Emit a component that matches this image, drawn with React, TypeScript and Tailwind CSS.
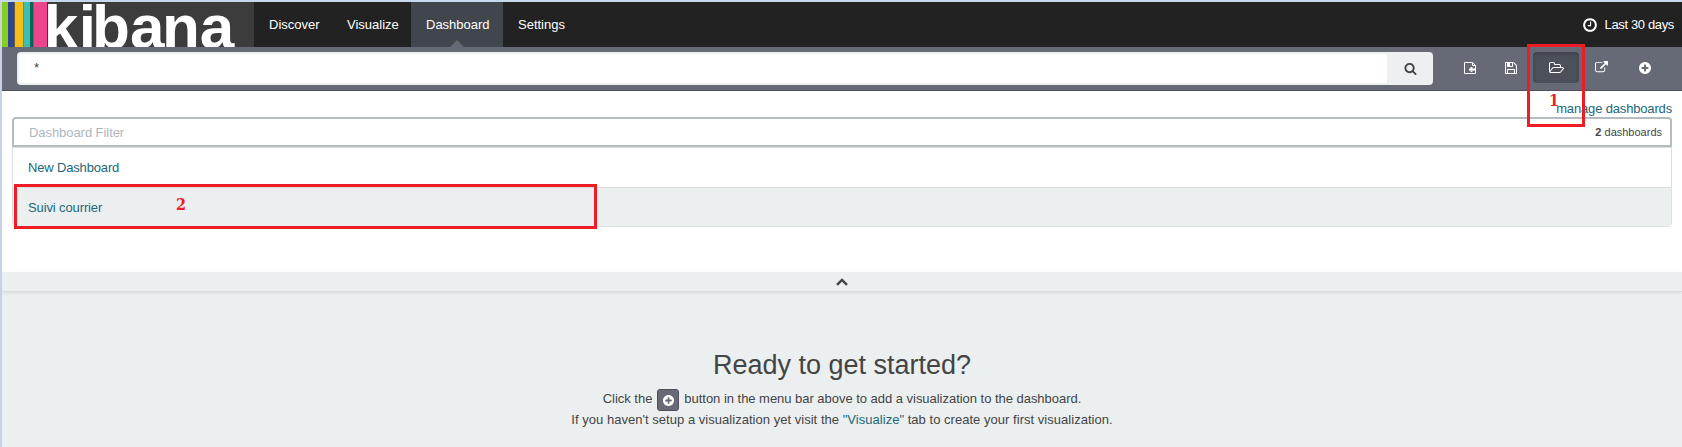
import React from "react";

const P = {
  clock: "M1024 544v448q0 14-9 23t-23 9h-320q-14 0-23-9t-9-23v-64q0-14 9-23t23-9h224v-352q0-14 9-23t23-9h64q14 0 23 9t9 23zm416 352q0-148-73-273t-198-198-273-73-273 73-198 198-73 273 73 273 198 198 273 73 273-73 198-198 73-273zm224 0q0 209-103 385.5t-279.5 279.5-385.5 103-385.5-103-279.5-279.5-103-385.5 103-385.5 279.5-279.5 385.5-103 385.5 103 279.5 279.5 103 385.5z",
  search: "M1216 832q0-185-131.5-316.5t-316.5-131.5-316.5 131.5-131.5 316.5 131.5 316.5 316.5 131.5 316.5-131.5 131.5-316.5zm512 832q0 52-38 90t-90 38q-54 0-90-38l-343-342q-179 124-399 124-143 0-273.5-55.5t-225-150-150-225-55.5-273.5 55.5-273.5 150-225 225-150 273.5-55.5 273.5 55.5 225 150 150 225 55.5 273.5q0 220-124 399l343 343q37 37 37 90z",
  plus: "M1344 960v-128q0-26-19-45t-45-19h-256v-256q0-26-19-45t-45-19h-128q-26 0-45 19t-19 45v256h-256q-26 0-45 19t-19 45v128q0 26 19 45t45 19h256v256q0 26 19 45t45 19h128q26 0 45-19t19-45v-256h256q26 0 45-19t19-45zm320-64q0 209-103 385.5t-279.5 279.5-385.5 103-385.5-103-279.5-279.5-103-385.5 103-385.5 279.5-279.5 385.5-103 385.5 103 279.5 279.5 103 385.5z",
  save: "M512 1536h768v-384h-768v384zm896 0h128v-896q0-14-10-38.5t-20-34.5l-281-281q-10-10-34-20t-39-10v416q0 40-28 68t-68 28h-576q-40 0-68-28t-28-68v-416h-128v1280h128v-416q0-40 28-68t68-28h832q40 0 68 28t28 68v416zm-384-928v-320q0-13-9.5-22.5t-22.5-9.5h-192q-13 0-22.5 9.5t-9.5 22.5v320q0 13 9.5 22.5t22.5 9.5h192q13 0 22.5-9.5t9.5-22.5zm640 32v928q0 40-28 68t-68 28h-1344q-40 0-68-28t-28-68v-1344q0-40 28-68t68-28h928q40 0 88 20t76 48l280 280q28 28 48 76t20 88z",
  folder: "M1845 931q0-35-53-35h-1088q-40 0-85.5 21.5t-71.5 52.5l-294 363q-18 24-18 40 0 35 53 35h1088q40 0 86-22t71-53l294-363q18-22 18-39zm-1141-163h768v-160q0-40-28-68t-68-28h-576q-40 0-68-28t-28-68v-64q0-40-28-68t-68-28h-320q-40 0-68 28t-28 68v853l256-315q44-53 116-87.5t140-34.5zm1269 163q0 62-46 120l-295 363q-43 53-116 87.5t-140 34.5h-1088q-92 0-158-66t-66-158v-960q0-92 66-158t158-66h320q92 0 158 66t66 158v32h544q92 0 158 66t66 158v160h192q54 0 99 24.5t67 70.5q15 32 15 68z",
  external: "M1408 928v320q0 119-84.5 203.5t-203.5 84.5h-832q-119 0-203.5-84.5t-84.5-203.5v-832q0-119 84.5-203.5t203.5-84.5h704q14 0 23 9t9 23v64q0 14-9 23t-23 9h-704q-66 0-113 47t-47 113v832q0 66 47 113t113 47h832q66 0 113-47t47-113v-320q0-14 9-23t23-9h64q14 0 23 9t9 23zm384-864v512q0 26-19 45t-45 19-45-19l-176-176-652 652q-10 10-23 10t-23-10l-114-114q-10-10-10-23t10-23l652-652-176-176q-19-19-19-45t19-45 45-19h512q26 0 45 19t19 45z",
};

function Icon({ d, className, box = "0 0 1792 1792" }: { d: string; className: string; box?: string }) {
  return (
    <svg viewBox={box} className={className} fill="currentColor">
      <path d={d} />
    </svg>
  );
}

function NewFileIcon() {
  return (
    <svg viewBox="0 0 12 14" className="h-[14px] w-3" fill="none" stroke="currentColor" strokeWidth="1">
      <path d="M.5 1.5h8l3 3v8H.5z" />
      <path d="M8.5 1.5v3h3" />
      <path d="M5 8.5h6M7.5 6v5" strokeWidth="1.8" />
    </svg>
  );
}

function Logo() {
  return (
    <div className="flex h-[45px] w-[252px] shrink-0 overflow-hidden bg-[#3c3c3c]">
      <div className="w-1.5 bg-[#84ce1c]" />
      <div className="w-1.5 bg-[#2f468f]" />
      <div className="w-px bg-[#6b5d3a]" />
      <div className="w-[8px] bg-[#f4bd19]" />
      <div className="w-px bg-[#6b8d6a]" />
      <div className="w-[6px] bg-[#3ebeb0]" />
      <div className="w-[3px] bg-[#006657]" />
      <div className="w-px bg-[#a14a6a]" />
      <div className="w-[13px] bg-[#ec458b]" />
      <svg viewBox="0 0 207 45" className="h-[45px] w-[207px] overflow-visible">
        <text x="-3.2 31.8 45 83 115 152.8" y="46" fill="#fff" fontSize="62" fontWeight="700" fontFamily="Liberation Sans, Arial, sans-serif">kibana</text>
      </svg>
    </div>
  );
}

export default function App() {
  return (
    <div className="relative flex h-[447px] w-[1682px] flex-col overflow-hidden border-l-2 border-t-2 border-l-[#c7d1e3] border-t-[#c5d9ee] bg-[#ebeff0] font-['Liberation_Sans',Arial,sans-serif] text-[13px] text-[#444]">
      <nav className="flex h-[45px] shrink-0 bg-[#222] leading-[45px] text-white">
        <Logo />
        <a className="w-[78px] pl-[15px]">Discover</a>
        <a className="w-[79px] pl-[15px]">Visualize</a>
        <a className="relative w-[92px] bg-[#41464d] pl-[15px]">
          Dashboard
          <span className="absolute bottom-0 left-[39px] border-x-[7px] border-b-[7px] border-x-transparent border-b-[#656a76]" />
        </a>
        <a className="pl-[15px]">Settings</a>
        <div className="ml-auto flex items-center pr-2">
          <Icon d={P.clock} className="mr-[7px] size-4" />
          <span className="tracking-[-0.36px]">Last 30 days</span>
        </div>
      </nav>

      <div className="flex h-11 shrink-0 border-b border-[#4d4f60] bg-[#656a76] pl-[15px] pt-[5px]">
        <div className="flex h-[33px] w-[1416px] overflow-hidden rounded-[4px] border-2 border-[#ecf0f1] bg-white">
          <div className="flex-1 pl-[15px] leading-[27px]">*</div>
          <div className="flex w-[44px] items-center justify-center bg-[#ecf0f1] pl-[3px]">
            <Icon d={P.search} className="size-[13px]" />
          </div>
        </div>
        <div className="ml-4 flex h-[31px] items-center text-white">
          <div className="flex w-[40px] justify-center pl-px"><NewFileIcon /></div>
          <div className="flex w-[44px] justify-center"><Icon d={P.save} className="size-[14px]" /></div>
          <div className="flex h-[31px] w-[46px] items-center justify-center rounded-[4px] bg-[#4c505b] shadow-[inset_0_2px_4px_rgba(0,0,0,0.2)]">
            <Icon d={P.folder} box="64 0 1920 1792" className="h-[14px] w-[15px]" />
          </div>
          <div className="flex w-[44px] justify-center"><Icon d={P.external} className="size-[13px]" /></div>
          <div className="flex w-[44px] justify-center"><Icon d={P.plus} className="size-[14px]" /></div>
        </div>
      </div>

      <section className="h-[181px] shrink-0 bg-white pl-[10px] pr-[10px] pt-[10px]">
        <div className="h-[16px] text-right leading-[16px] tracking-[-0.16px] text-[#20687a]">manage dashboards</div>
        <div className="flex h-[30px] items-center justify-between rounded-t-[4px] border-2 border-[#b4bcc2] pl-[15px] pr-2">
          <span className="pt-px tracking-[-0.06px] text-[#acb6c0]">Dashboard Filter</span>
          <span className="pt-px text-[11px]"><b>2</b> dashboards</span>
        </div>
        <div className="rounded-b-[4px] border border-[#dcdedf] text-[#20687a]">
          <div className="h-[39px] pl-[15px] leading-[39px] tracking-[-0.16px]">New Dashboard</div>
          <div className="h-[39px] rounded-b-[3px] border-t border-[#dcdedf] bg-[#ebeff0] pl-[15px] leading-[39px] tracking-[-0.12px]">Suivi courrier</div>
        </div>
      </section>

      <div className="flex h-5 shrink-0 items-center justify-center border-b border-[#d9dddd] shadow-[0_1px_3px_rgba(0,0,0,0.08)]">
        <svg viewBox="0 0 12 8" className="h-2 w-3" fill="none" stroke="#444" strokeWidth="2.5"><path d="M1 6.8 6 1.9l5 4.9" /></svg>
      </div>

      <main className="flex flex-col items-center pt-[57px]">
        <h1 className="text-[27px] leading-[32px]">Ready to get started?</h1>
        <p className="mt-[7px] flex h-[22px] items-center leading-[22px] tracking-[-0.03px]">
          Click the
          <span className="ml-[5px] mr-[5px] mt-[2px] flex size-[22px] items-center justify-center rounded-[3px] border border-[#4d505b] bg-[#656a76] text-white"><Icon d={P.plus} className="size-[13px]" /></span>
          button in the menu bar above to add a visualization to the dashboard.
        </p>
        <p className="leading-[20px] tracking-[0.03px]">If you haven't setup a visualization yet visit the <a className="text-[#20687a]">"Visualize"</a> tab to create your first visualization.</p>
      </main>

      <div className="absolute left-[1525px] top-[42px] h-[83px] w-[58px] border-[3px] border-[#ee1c24]" />
      <div className="absolute left-[1547px] top-[88px] font-['DejaVu_Serif_Condensed','DejaVu_Serif',serif] text-[16px] font-bold leading-[22px] text-[#ee1c24]">1</div>
      <div className="absolute left-3 top-[182px] h-[45px] w-[583px] border-[3px] border-[#ee1c24]" />
      <div className="absolute left-[174px] top-[192px] font-['DejaVu_Serif_Condensed','DejaVu_Serif',serif] text-[16px] font-bold leading-[22px] text-[#ee1c24]">2</div>
    </div>
  );
}
